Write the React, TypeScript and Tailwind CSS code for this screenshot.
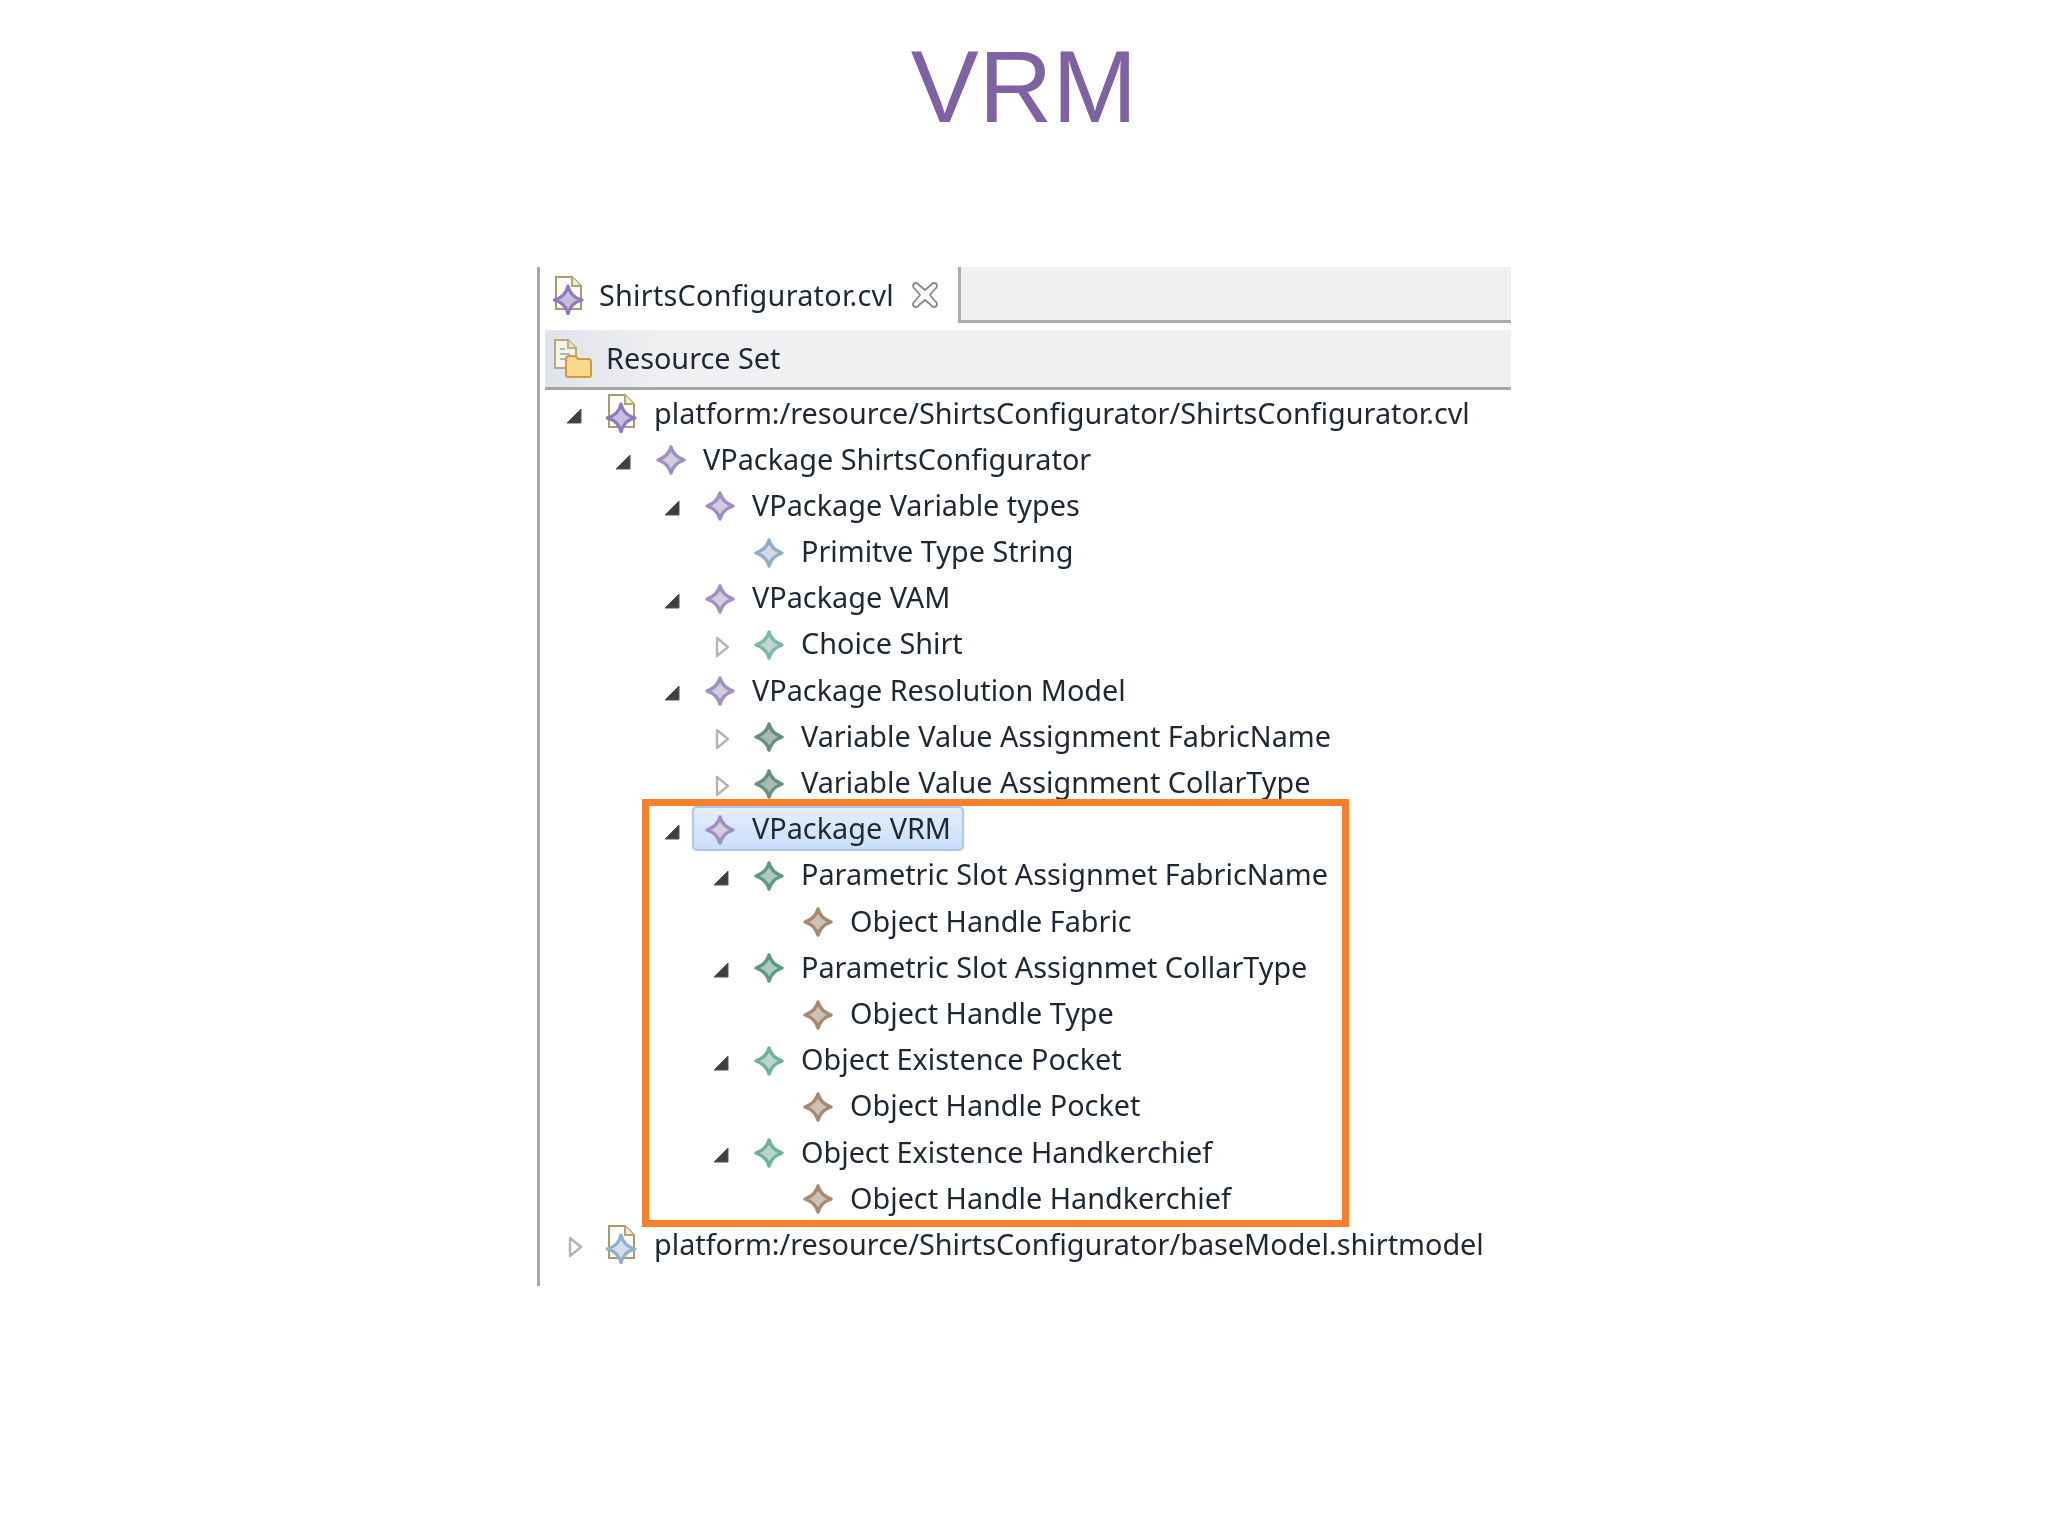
import React from "react";

type Kind = "pkg" | "prim" | "choice" | "assign" | "slot" | "exist" | "handle";

const starColors: Record<Kind, [string, string]> = {
  pkg: ["#a08fc4", "#d2cddd"],
  prim: ["#93acc8", "#d0d9e4"],
  choice: ["#7ab8a8", "#c2d6d1"],
  assign: ["#64917f", "#a9bbb4"],
  slot: ["#5a9c83", "#b0c9bf"],
  exist: ["#6cb497", "#bdd3ca"],
  handle: ["#a68a70", "#cfc1b3"],
};

// four pointed star used by all the model elements
function Star({ kind }: { kind: Kind }) {
  const [stroke, fill] = starColors[kind];
  return (
    <svg width="30" height="30" viewBox="0 0 30 30" className="translate-y-[1px]">
      <path
        d="M15 2 C16.5 8 21 12.5 28 15 C21 17.5 16.5 22 15 28 C13.5 22 9 17.5 2 15 C9 12.5 13.5 8 15 2 Z"
        fill={fill}
        stroke={stroke}
        strokeWidth="3.4"
        strokeLinejoin="round"
      />
    </svg>
  );
}

function FileIcon({ color, inner }: { color: string; inner: string }) {
  return (
    <svg width="32" height="40" viewBox="0 0 32 40">
      <path d="M3 2 H19 L28 11 V34 H3 Z" fill="#fdfcf8" stroke="#a89c6c" strokeWidth="2" />
      <path d="M19 2 V11 H28" fill="#f3ead0" stroke="#b8a670" strokeWidth="2" />
      <path
        d="M15 11 C16.5 18 21 23 29 25 C21 27 16.5 32 15 39 C13.5 32 9 27 1 25 C9 23 13.5 18 15 11 Z"
        fill={inner}
        stroke={color}
        strokeWidth="3.2"
        strokeLinejoin="round"
      />
    </svg>
  );
}

function ResourceSetIcon() {
  return (
    <svg width="40" height="42" viewBox="0 0 40 42">
      <path d="M2 2 H15 L23 10 V30 H2 Z" fill="#f6f3ea" stroke="#b5a878" strokeWidth="2" />
      <path d="M15 2 V10 H23" fill="#efe3c2" stroke="#c2ae74" strokeWidth="2" />
      <path d="M7 11 H12 M7 16 H17 M7 21 H15" stroke="#a9b4c4" strokeWidth="2" />
      <path
        d="M13 21 Q13 18 16 18 H22 L25 21 H35 Q38 21 38 24 V37 Q38 39 36 39 H15 Q13 39 13 37 Z"
        fill="#fad88c"
        stroke="#d19a3e"
        strokeWidth="2"
      />
    </svg>
  );
}

function CloseIcon() {
  return (
    <svg width="28" height="28" viewBox="0 0 28 28">
      <path
        d="M2 5 Q2 2 5 2 Q7 2 8 4 L14 9 L20 4 Q21 2 23 2 Q26 2 26 5 Q26 7 24 8 L19 14 L24 20 Q26 21 26 23 Q26 26 23 26 Q21 26 20 24 L14 19 L8 24 Q7 26 5 26 Q2 26 2 23 Q2 21 4 20 L9 14 L4 8 Q2 7 2 5 Z"
        fill="#fff"
        stroke="#8a8a8a"
        strokeWidth="1.8"
        strokeLinejoin="round"
      />
    </svg>
  );
}

function Arrow({ open }: { open: boolean }) {
  if (open) {
    return (
      <svg width="16" height="16" viewBox="0 0 16 16" className="ml-[7px] translate-y-[3px]">
        <path d="M15 1 V15 H1 Z" fill="#3f3f3f" stroke="#555" strokeWidth="1" strokeLinejoin="round" />
      </svg>
    );
  }
  return (
    <svg width="16" height="22" viewBox="0 0 16 22" className="ml-[9px] translate-y-[3px]">
      <path d="M2 2 L13 11 L2 20 Z" fill="#fff" stroke="#b4b4b4" strokeWidth="2.4" strokeLinejoin="round" />
    </svg>
  );
}

type Row = {
  level: number;
  text: string;
  kind?: Kind;
  file?: "purple" | "blue";
  arrow?: "open" | "closed";
  selected?: boolean;
};

const rows: Row[] = [
  { level: 0, text: "platform:/resource/ShirtsConfigurator/ShirtsConfigurator.cvl", file: "purple", arrow: "open" },
  { level: 1, text: "VPackage ShirtsConfigurator", kind: "pkg", arrow: "open" },
  { level: 2, text: "VPackage Variable types", kind: "pkg", arrow: "open" },
  { level: 3, text: "Primitve Type String", kind: "prim" },
  { level: 2, text: "VPackage VAM", kind: "pkg", arrow: "open" },
  { level: 3, text: "Choice Shirt", kind: "choice", arrow: "closed" },
  { level: 2, text: "VPackage Resolution Model", kind: "pkg", arrow: "open" },
  { level: 3, text: "Variable Value Assignment FabricName", kind: "assign", arrow: "closed" },
  { level: 3, text: "Variable Value Assignment CollarType", kind: "assign", arrow: "closed" },
  { level: 2, text: "VPackage VRM", kind: "pkg", arrow: "open", selected: true },
  { level: 3, text: "Parametric Slot Assignmet FabricName", kind: "slot", arrow: "open" },
  { level: 4, text: "Object Handle Fabric", kind: "handle" },
  { level: 3, text: "Parametric Slot Assignmet CollarType", kind: "slot", arrow: "open" },
  { level: 4, text: "Object Handle Type", kind: "handle" },
  { level: 3, text: "Object Existence Pocket", kind: "exist", arrow: "open" },
  { level: 4, text: "Object Handle Pocket", kind: "handle" },
  { level: 3, text: "Object Existence Handkerchief", kind: "exist", arrow: "open" },
  { level: 4, text: "Object Handle Handkerchief", kind: "handle" },
  { level: 0, text: "platform:/resource/ShirtsConfigurator/baseModel.shirtmodel", file: "blue", arrow: "closed" },
];

const indents = ["pl-[19px]", "pl-[68px]", "pl-[117px]", "pl-[166px]", "pl-[215px]"];

function TreeRow({ row }: { row: Row }) {
  const icon = row.file ? (
    row.file === "purple" ? (
      <FileIcon color="#8f78bb" inner="#c8bfdc" />
    ) : (
      <FileIcon color="#8fb0cc" inner="#d3dde8" />
    )
  ) : (
    <Star kind={row.kind as Kind} />
  );

  return (
    <div className={`flex h-[46.2px] items-center ${indents[row.level]}`}>
      <div className="flex w-[46px] shrink-0 items-center">
        {row.arrow && <Arrow open={row.arrow === "open"} />}
      </div>
      {row.selected ? (
        <div className="z-10 -ml-[11px] flex h-[45px] items-center rounded-[5px] border-2 border-[#adc7ec] bg-gradient-to-b from-[#e4effd] to-[#cadef8] pl-[9px] pr-[11px]">
          <div className="flex w-[34px] shrink-0 justify-center">{icon}</div>
          <span className="ml-[15px] -translate-y-[1px]">{row.text}</span>
        </div>
      ) : (
        <>
          <div className="flex w-[34px] shrink-0 justify-center">{icon}</div>
          <span className="ml-[15px] -translate-y-[1px] whitespace-nowrap">{row.text}</span>
        </>
      )}
    </div>
  );
}

export default function App() {
  return (
    <div className="min-h-[1536px] w-[2048px] bg-white pt-[26px]">
      <h1 className="text-center font-['Liberation_Sans',sans-serif] text-[102px] leading-[122px] text-[#7f62a4]">
        VRM
      </h1>

      <div className="mx-auto mt-[119px] h-[1019px] w-[974px] border-l-[3px] border-[#a9a9a9] font-['Noto_Sans',sans-serif] text-[28.8px] text-[#1d2735] blur-[0.4px]">
        {/* tab strip */}
        <div className="flex h-[56px]">
          <div className="flex w-[418px] items-center pl-[13px]">
            <FileIcon color="#8f78bb" inner="#c8bfdc" />
            <span className="ml-[14px] tracking-[0.25px]">ShirtsConfigurator.cvl</span>
            <div className="ml-[17px]">
              <CloseIcon />
            </div>
          </div>
          <div className="flex-1 border-b-[3px] border-l-[3px] border-[#acacac] bg-[#f0eff1]" />
        </div>

        {/* resource set header */}
        <div className="ml-[5px] mt-[7px] flex h-[60px] items-center border-b-[3px] border-[#a6a6a6] bg-gradient-to-r from-[#dfe3ea] to-[#f0eff1] to-[12%] pl-[8px]">
          <ResourceSetIcon />
          <span className="ml-[13px] -translate-y-[1px]">Resource Set</span>
        </div>

        {/* tree */}
        <div className="relative">
          {rows.map((row) => (
            <TreeRow key={row.text} row={row} />
          ))}
          <div className="absolute left-[102px] top-[409px] h-[428px] w-[707px] border-[7px] border-[#fb8029]" />
        </div>
      </div>
    </div>
  );
}
